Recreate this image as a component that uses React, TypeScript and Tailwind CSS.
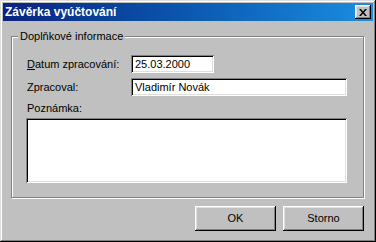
import React from 'react';

const font = { fontFamily: '"Liberation Sans", Arial, sans-serif' };

const sunken =
  'bg-white shadow-[inset_1px_1px_#808080,inset_-1px_-1px_#ffffff,inset_2px_2px_#000000,inset_-2px_-2px_#dfdfdf]';
const raised =
  'bg-[#c0c0c0] shadow-[inset_-1px_-1px_#000000,inset_1px_1px_#ffffff,inset_-2px_-2px_#808080,inset_2px_2px_#dfdfdf]';

function Button({ children }: { children: React.ReactNode }) {
  return (
    <button className={`${raised} w-[81px] h-[25px] text-[11px] text-black flex items-center justify-center`}>
      {children}
    </button>
  );
}

export default function App() {
  return (
    <div
      style={font}
      className="w-[376px] h-[242px] bg-[#c0c0c0] p-[3px] flex flex-col text-[11px] text-black shadow-[inset_-1px_-1px_#000000,inset_1px_1px_#dfdfdf,inset_-2px_-2px_#808080,inset_2px_2px_#ffffff]"
    >
      {/* title bar */}
      <div className="h-[18px] flex items-center justify-between pl-[2px] pr-[2px] bg-gradient-to-r from-[#0a2280] to-[#1c8ee0]">
        <span className="text-white font-bold text-[12px] leading-none">Závěrka vyúčtování</span>
        <div className={`${raised} w-[16px] h-[14px] flex items-center justify-center`}>
          <svg width="8" height="7" viewBox="0 0 8 7">
            <path d="M0 0h2l2 2.5L6 0h2L5 3.5 8 7H6L4 4.5 2 7H0l3-3.5z" fill="#000" />
          </svg>
        </div>
      </div>

      {/* group box */}
      <fieldset className="mt-[9px] ml-[8px] w-[353px] h-[168px] p-0 border border-[#808080] shadow-[1px_1px_0_#ffffff,inset_1px_1px_0_#ffffff]">
        <legend className="ml-[6px] px-[2px] bg-[#c0c0c0] leading-[13px]">Doplňkové informace</legend>

        <div className="flex flex-col pl-[15px]">
          <div className="flex items-center mt-[12px]">
            <span className="w-[104px]">
              <span className="underline">D</span>atum zpracování:
            </span>
            <div className={`${sunken} w-[83px] h-[18px] flex items-center pl-[4px]`}>25.03.2000</div>
          </div>
          <div className="flex items-center mt-[5px]">
            <span className="w-[104px]">Zpracoval:</span>
            <div className={`${sunken} w-[216px] h-[18px] flex items-center pl-[4px]`}>Vladimír Novák</div>
          </div>
          <div className="mt-[6px] leading-[13px]">Poznámka:</div>
          <div className={`${sunken} -ml-px mt-[3px] w-[321px] h-[65px]`} />
        </div>
      </fieldset>

      {/* buttons */}
      <div className="mt-[8px] flex justify-end gap-[7px] pr-[9px]">
        <Button>OK</Button>
        <Button>Storno</Button>
      </div>
    </div>
  );
}
